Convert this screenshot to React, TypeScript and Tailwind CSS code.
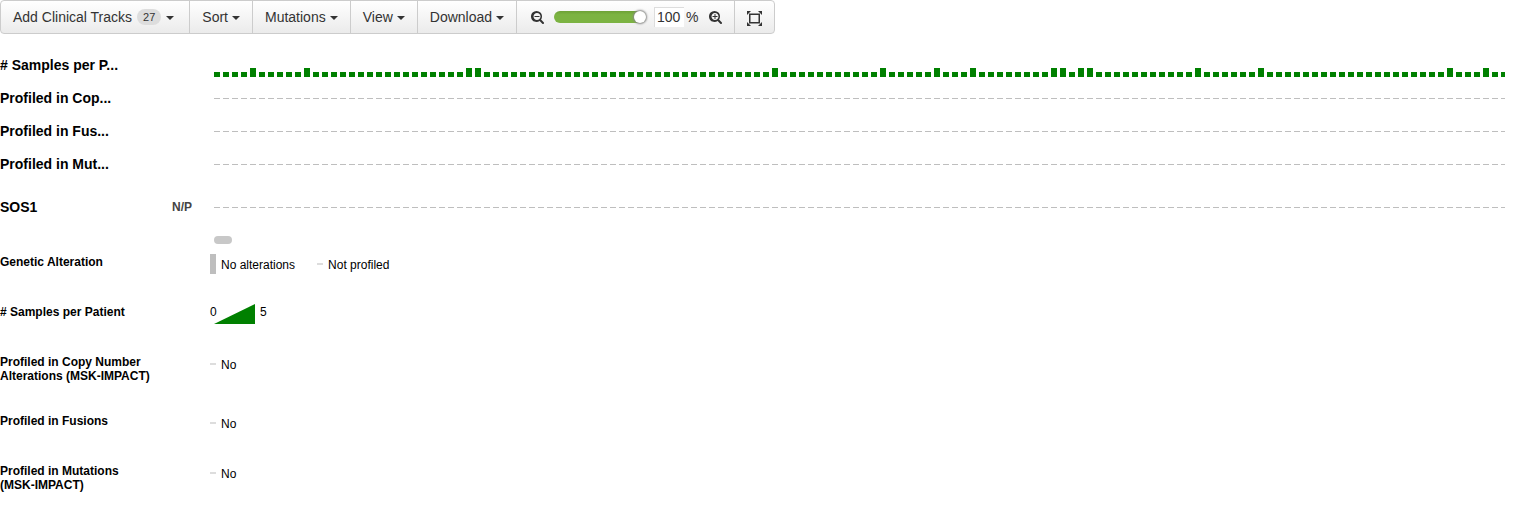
import React from "react";

const PITCH = 9;
const CELL = 6;
const PATIENTS = 144;
const MULTI_SAMPLE = new Set([4, 10, 28, 29, 62, 74, 80, 84, 93, 94, 96, 97, 109, 116, 137, 141]);
const patients = Array.from({ length: PATIENTS }, (_, i) => i);

const LENS =
  "M1216 832q0-185-131.5-316.5t-316.5-131.5-316.5 131.5-131.5 316.5 131.5 316.5 316.5 131.5 316.5-131.5 131.5-316.5zM1664 1664q0 53-37.5 90.5t-90.5 37.5q-54 0-90-38l-343-342q-179 124-399 124-143 0-273.5-55.5t-225-150-150-225-55.5-273.5 55.5-273.5 150-225 225-150 273.5-55.5 273.5 55.5 225 150 150 225 55.5 273.5q0 220-124 399l343 343q37 37 37 90z";
const MINUS =
  "M1088 800v64q0 13-9.5 22.5t-22.5 9.5h-576q-13 0-22.5-9.5t-9.5-22.5v-64q0-13 9.5-22.5t22.5-9.5h576q13 0 22.5 9.5t9.5 22.5z";
const PLUS =
  "M1088 800v64q0 13-9.5 22.5t-22.5 9.5h-224v224q0 13-9.5 22.5t-22.5 9.5h-64q-13 0-22.5-9.5t-9.5-22.5v-224h-224q-13 0-22.5-9.5t-9.5-22.5v-64q0-13 9.5-22.5t22.5-9.5h224v-224q0-13 9.5-22.5t22.5-9.5h64q13 0 22.5 9.5t9.5 22.5v224h224q13 0 22.5 9.5t9.5 22.5z";

function SearchIcon({ sign }: { sign: string }) {
  return (
    <svg viewBox="0 128 1664 1664" className="size-[13px] fill-[#333]" aria-hidden="true">
      <path d={sign} />
      <path fillRule="evenodd" d={LENS} />
    </svg>
  );
}

function FitIcon() {
  return (
    <svg viewBox="0 0 15 15" className="size-[15px]" fill="none" stroke="#333" aria-hidden="true">
      <rect x="2.75" y="3.25" width="9.5" height="8.5" strokeWidth="1.5" />
      <path d="M0 0h4L0 4zM15 0h-4l4 4zM0 15h4l-4-4zM15 15h-4l4-4z" fill="#333" stroke="none" />
    </svg>
  );
}

function MenuButton({ label, count }: { label: string; count?: number }) {
  return (
    <button
      type="button"
      className={`flex h-full items-center border-r border-[#ccc] pl-3 ${count ? "gap-[5px] pr-[15px]" : "gap-1 pr-3"}`}
    >
      <span>{label}</span>
      {count && (
        <span className="flex h-4 items-center rounded-full bg-[#ddd] px-1.5 pt-px text-[11px]">{count}</span>
      )}
      <span className="mt-px border-x-4 border-t-4 border-x-transparent border-t-[#333]" />
    </button>
  );
}

function Toolbar() {
  return (
    <div className="flex h-[34px] w-fit items-center rounded border border-[#ccc] bg-linear-to-b from-white to-[#ebebeb] text-sm text-[#333]">
      <MenuButton label="Add Clinical Tracks" count={27} />
      <MenuButton label="Sort" />
      <MenuButton label="Mutations" />
      <MenuButton label="View" />
      <MenuButton label="Download" />
      <div className="flex h-full items-center border-r border-[#ccc] pr-3 pl-3.5">
        <button type="button" aria-label="Zoom out">
          <SearchIcon sign={MINUS} />
        </button>
        <input
          type="range"
          aria-label="Zoom"
          min={0}
          max={100}
          defaultValue={100}
          className="mr-2 ml-2.5 h-3 w-[92px] appearance-none rounded-full bg-linear-to-b from-[#6da136] to-[#7cb342] to-30% [&::-webkit-slider-thumb]:size-3 [&::-webkit-slider-thumb]:appearance-none [&::-webkit-slider-thumb]:rounded-full [&::-webkit-slider-thumb]:bg-white [&::-webkit-slider-thumb]:shadow-[0_0_2px_1px_#888]"
        />
        <input
          type="text"
          aria-label="Zoom percentage"
          defaultValue="100"
          className="h-5 w-[30px] border-t border-l border-[#ddd] bg-white pb-0.5 pl-0.5 text-sm leading-none"
        />
        <span className="ml-0.5">%</span>
        <button type="button" aria-label="Zoom in" className="ml-2.5">
          <SearchIcon sign={PLUS} />
        </button>
      </div>
      <button type="button" aria-label="Fit to window" className="flex h-full items-center px-3 pt-0.5">
        <FitIcon />
      </button>
    </div>
  );
}

function TrackRow({ label, value, bars }: { label: string; value?: string; bars?: boolean }) {
  return (
    <div className="flex h-[33px] items-center">
      <div className="flex w-[214px] shrink-0 items-center justify-between pr-[22px] pb-0.5">
        <span className="text-sm font-bold text-black">{label}</span>
        {value && <span className="text-xs font-bold text-[#444]">{value}</span>}
      </div>
      <svg className="h-[23px] min-w-0 flex-1" shapeRendering="crispEdges" aria-hidden="true">
        {patients.map((i) => {
          const height = bars ? (MULTI_SAMPLE.has(i) ? 9 : 5) : 1;
          return (
            <rect
              key={i}
              x={i * PITCH}
              y={bars ? 23 - height : 11}
              width={CELL}
              height={height}
              fill={bars ? "#008000" : "#bebebe"}
            />
          );
        })}
      </svg>
    </div>
  );
}

function LegendRow({ title, children }: { title: React.ReactNode; children: React.ReactNode }) {
  return (
    <div className="flex items-start">
      <div className="w-[210px] shrink-0 pt-px text-xs leading-[14px] font-bold">{title}</div>
      <div className="flex h-5 gap-[22px] text-xs">{children}</div>
    </div>
  );
}

function LegendItem({ label, filled }: { label: string; filled?: boolean }) {
  return (
    <div className="flex items-center gap-[5px]">
      <span className={filled ? "h-5 w-1.5 bg-[#bebebe]" : "h-0.5 w-1.5 bg-[#ddd]"} />
      <span className="pt-0.5 leading-[18px]">{label}</span>
    </div>
  );
}

export default function App() {
  return (
    <main className="bg-white font-['Liberation_Sans',Arial,sans-serif] text-black">
      <Toolbar />
      <section className="mt-[15px] pr-[15px]">
        <TrackRow label="# Samples per P..." bars />
        <TrackRow label="Profiled in Cop..." />
        <TrackRow label="Profiled in Fus..." />
        <TrackRow label="Profiled in Mut..." />
        <div className="mt-2.5">
          <TrackRow label="SOS1" value="N/P" />
        </div>
        <div className="mt-3 ml-[214px] h-2 w-[18px] rounded-full bg-[#c8c8c8]" />
      </section>
      <section className="mt-2.5 flex flex-col gap-[30px]">
        <LegendRow title="Genetic Alteration">
          <LegendItem label="No alterations" filled />
          <LegendItem label="Not profiled" />
        </LegendRow>
        <LegendRow title="# Samples per Patient">
          <div className="flex pt-px leading-[14px]">
            <span className="w-1">0</span>
            <svg viewBox="0 0 41 20" className="-mt-px h-5 w-[41px]" aria-hidden="true">
              <path d="M0 20L41 0V20z" fill="#008000" />
            </svg>
            <span className="ml-[5px]">5</span>
          </div>
        </LegendRow>
        <LegendRow
          title={
            <>
              Profiled in Copy Number
              <br />
              Alterations (MSK-IMPACT)
            </>
          }
        >
          <LegendItem label="No" />
        </LegendRow>
        <LegendRow title="Profiled in Fusions">
          <LegendItem label="No" />
        </LegendRow>
        <LegendRow
          title={
            <>
              Profiled in Mutations
              <br />
              (MSK-IMPACT)
            </>
          }
        >
          <LegendItem label="No" />
        </LegendRow>
      </section>
    </main>
  );
}
